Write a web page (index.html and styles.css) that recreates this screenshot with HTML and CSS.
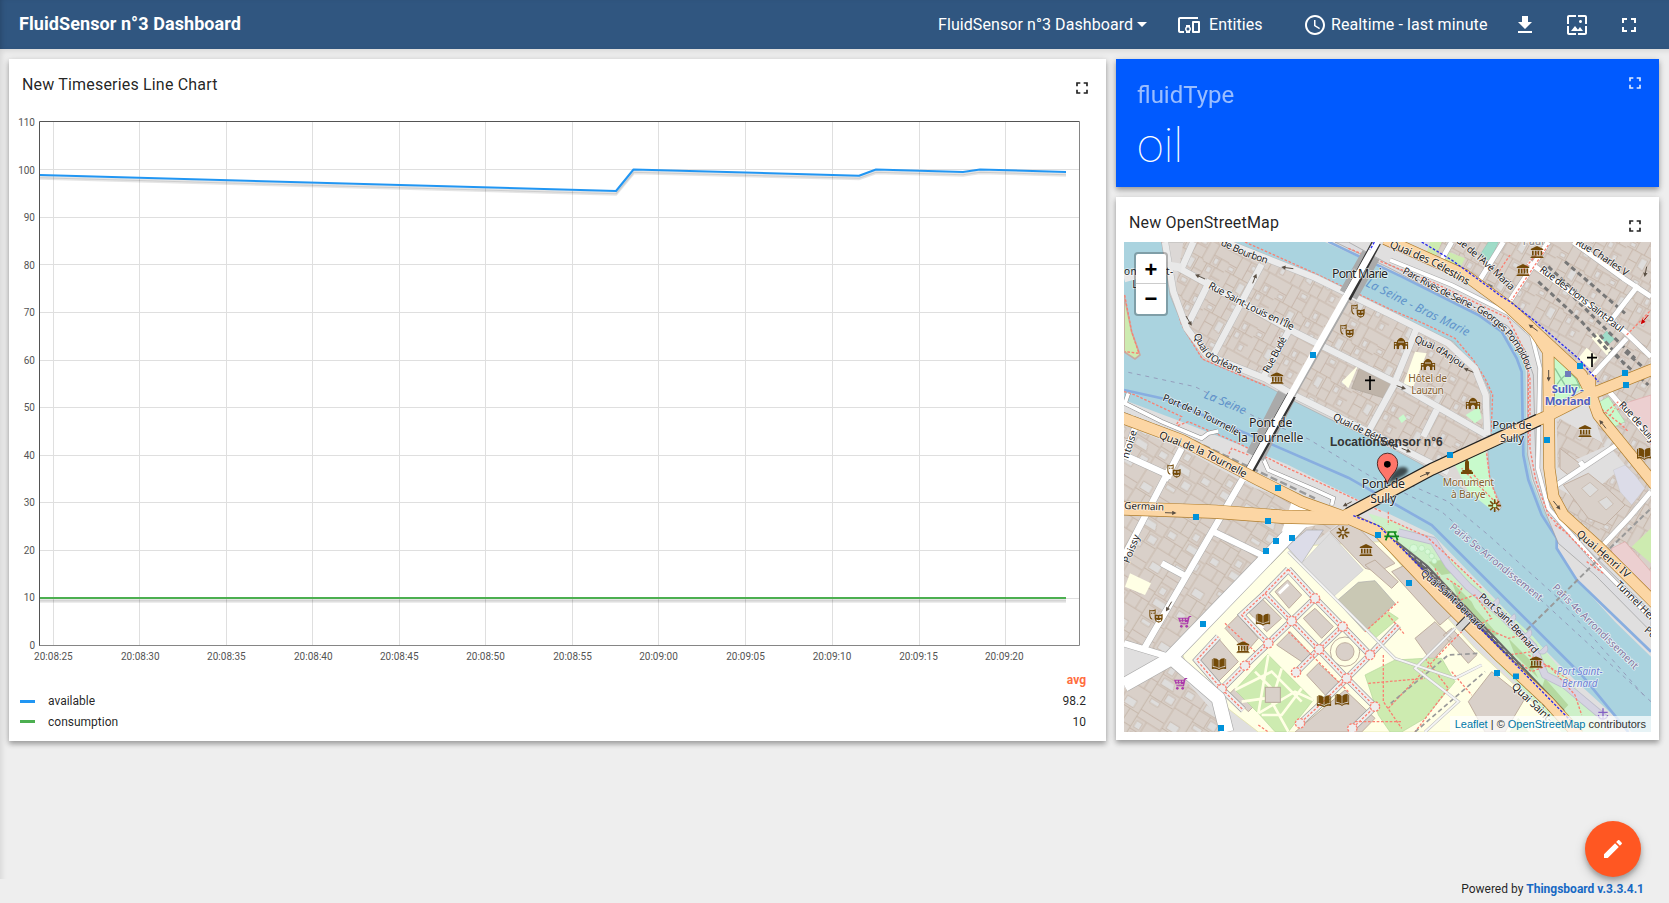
FILE: index.html
```html
<!DOCTYPE html>
<html lang="en">
<head>
<meta charset="utf-8">
<title>FluidSensor n°3 Dashboard</title>
<link rel="stylesheet" href="styles.css">
</head>
<body>
<svg class="defs" width="0" height="0" aria-hidden="true">
  <symbol id="i-full" viewBox="0 0 24 24"><path d="M7 14H5v5h5v-2H7v-3zm-2-4h2V7h3V5H5v5zm12 7h-3v2h5v-5h-2v3zM14 5v2h3v3h2V5h-5z"/></symbol>
</svg>
<header class="toolbar">
  <h1 class="title">FluidSensor n°3 Dashboard</h1>
  <div class="state"><span>FluidSensor n°3 Dashboard</span><i class="caret"></i></div>
  <div class="tool entities">
    <svg viewBox="0 0 24 24"><path d="M3 6h18V4H3c-1.1 0-2 .9-2 2v12c0 1.100.9 2 2 2h4v-2H3V6zm10 6H9v1.780c-.61.55-1 1.330-1 2.220s.39 1.670 1 2.220V20h4v-1.780c.61-.55 1-1.340 1-2.220s-.39-1.670-1-2.220V12zm-2 5.500c-.83 0-1.500-.67-1.500-1.500s.67-1.500 1.500-1.500 1.500.67 1.500 1.500-.67 1.500-1.500 1.500zM22 8h-6c-.5 0-1 .5-1 1v10c0 .5.5 1 1 1h6c.5 0 1-.5 1-1V9c0-.5-.5-1-1-1zm-1 10h-4v-8h4v8z"/></svg>
    <span>Entities</span>
  </div>
  <div class="tool time">
    <svg viewBox="0 0 24 24"><path d="M11.990 2C6.470 2 2 6.480 2 12s4.470 10 9.990 10C17.520 22 22 17.520 22 12S17.520 2 11.990 2zM12 20c-4.420 0-8-3.580-8-8s3.580-8 8-8 8 3.580 8 8-3.580 8-8 8zm.5-13H11v6l5.250 3.150.75-1.230-4.500-2.670z"/></svg>
    <span>Realtime - last minute</span>
  </div>
  <svg class="tb" viewBox="0 0 24 24"><path d="M19 9h-4V3H9v6H5l7 7 7-7zM5 18v2h14v-2H5z"/></svg>
  <svg class="tb" viewBox="0 0 24 24"><path d="M4 4h7V2H4c-1.100 0-2 .9-2 2v7h2V4zm6 9l-4 5h12l-3-4-2.030 2.710L10 13zm7-4.500c0-.83-.67-1.500-1.500-1.500S14 7.670 14 8.500s.67 1.500 1.500 1.500S17 9.330 17 8.500zM20 2h-7v2h7v7h2V4c0-1.100-.9-2-2-2zm0 18h-7v2h7c1.100 0 2-.9 2-2v-7h-2v7zM4 13H2v7c0 1.100.9 2 2 2h7v-2H4v-7z"/></svg>
  <svg class="tb" viewBox="0 0 24 24"><use href="#i-full"/></svg>
</header>

<main class="board">
  <section class="card chart-card">
    <div class="card-head"><h2>New Timeseries Line Chart</h2><svg class="fs" viewBox="0 0 24 24"><use href="#i-full"/></svg></div>
    <svg class="chart" viewBox="9 110 1097 555" width="1097" height="555">
      <path class="grid" d="M53.500 122V645M139.500 122V645M226.500 122V645M312.500 122V645M399.500 122V645M485.500 122V645M572.500 122V645M658.500 122V645M745.500 122V645M832.500 122V645M919.500 122V645M1005.500 122V645M40 169.500H1079M40 217.500H1079M40 264.500H1079M40 312.500H1079M40 360.500H1079M40 407.500H1079M40 455.500H1079M40 502.500H1079M40 550.500H1079M40 598.500H1079"/>
      <g class="shade">
        <path d="M40 177L616 193L634 171.500L859 177.500L876 171.500L963 174L980 171.500L1066 174"/>
        <path d="M40 600H1066"/>
        <path d="M40 178.500L616 194.500L634 173L859 179L876 173L963 175.500L980 173L1066 175.500"/>
        <path d="M40 601.500H1066"/>
      </g>
      <path class="line blue" d="M40 175L616 191L633.500 169.500L859 175.700L876 169.500L963 172L980 169.500L1066 172"/>
      <path class="line green" d="M40 598H1066"/>
      <path class="frame" d="M39.500 646V121.500H1079.500"/><path class="frame soft" d="M39.500 645.500H1079.500V121.500"/>
      <g class="tick y"><text x="35" y="126">110</text><text x="35" y="174">100</text><text x="35" y="221">90</text><text x="35" y="269">80</text><text x="35" y="316">70</text><text x="35" y="364">60</text><text x="35" y="411">50</text><text x="35" y="459">40</text><text x="35" y="506">30</text><text x="35" y="554">20</text><text x="35" y="601">10</text><text x="35" y="649">0</text></g>
      <g class="tick x"><text x="53.400" y="660">20:08:25</text><text x="140.300" y="660">20:08:30</text><text x="226.400" y="660">20:08:35</text><text x="313.300" y="660">20:08:40</text><text x="399.300" y="660">20:08:45</text><text x="485.500" y="660">20:08:50</text><text x="572.500" y="660">20:08:55</text><text x="658.500" y="660">20:09:00</text><text x="745.500" y="660">20:09:05</text><text x="832" y="660">20:09:10</text><text x="918.500" y="660">20:09:15</text><text x="1004.300" y="660">20:09:20</text></g>
    </svg>
    <div class="legend">
      <div class="avg">avg</div>
      <div class="row"><i class="sw sw-blue"></i><span>available</span><b>98.2</b></div>
      <div class="row"><i class="sw sw-green"></i><span>consumption</span><b>10</b></div>
    </div>
  </section>

  <div class="side">
    <section class="card fluid">
      <div class="fluid-text"><div class="fluid-label">fluidType</div><div class="fluid-value">oil</div></div>
      <svg class="fs" viewBox="0 0 24 24"><use href="#i-full"/></svg>
    </section>
    <section class="card map-card">
      <div class="card-head"><h2>New OpenStreetMap</h2><svg class="fs" viewBox="0 0 24 24"><use href="#i-full"/></svg></div>
      <div class="map">
<svg class="tiles" viewBox="27 21 1581 1470" width="527" height="490">
<defs>
  <pattern id="par" width="170" height="130" patternUnits="userSpaceOnUse" patternTransform="rotate(29)">
    <rect width="170" height="130" fill="#d9d0c9"/>
    <path d="M0 3H170M0 64H95L100 70H170M28 3V40H0M28 40V64M58 3V64M58 30H92V3M92 30V64M120 3V70M120 38H170M145 38V70M20 64V130M20 96H50V130M50 64V96M82 64V130M82 100H112V70M112 100V130M140 70V130M140 98H170" fill="none" stroke="#c3b2a5" stroke-width="2.500"/>
    <path d="M66 10h18v14H66zM126 44l14-2v20h-12zM56 74h20v34l-20-4zM6 46h16v12H6zM118 76h14v18h-14zM146 104h14v18h-14z" fill="#dedddc" stroke="#c3b2a5" stroke-width="2"/>
  </pattern>
  <pattern id="par2" width="190" height="150" patternUnits="userSpaceOnUse" patternTransform="rotate(-58)">
    <rect width="190" height="150" fill="#d9d0c9"/>
    <path d="M0 3H190M0 70H190M32 3V70M70 3V45H32M70 45V70M105 3V70M105 40H150V3M150 40V70M25 70V150M25 110H65V70M65 110V150M100 70V150M100 105H140V150M140 105V70M165 70V150" fill="none" stroke="#c3b2a5" stroke-width="2.500"/>
    <path d="M76 10h20v26H76zM156 14h24v34h-24zM32 116h24v26H32zM108 78h22v20h-22zM70 80h22v36l-22 8zM6 80h14v30H6z" fill="#dedddc" stroke="#c3b2a5" stroke-width="2"/>
  </pattern>
  <symbol id="museum" viewBox="0 0 40 36"><path d="M20 0L39 9V12H1V9zM5 14h5v14H5zM13.500 14h5v14h-5zM22 14h5v14h-5zM30.500 14h5v14h-5zM3 29h34v3H3zM0 33h40v3H0z"/></symbol>
  <symbol id="mask" viewBox="0 0 42 42"><path fill-rule="evenodd" d="M1 2Q10 6 20 1V14H17V5Q10 8 4 5V20Q5 27 10 29V32Q2 30 1 20zM6 11h4v3H6zM13 11h4v3h-4zM17 16Q29 20 41 15V28Q40 39 29 41Q18 39 17 28zM21 22v4h6v-4zM31 22v4h6v-4zM22 31Q29 37 36 31V35Q29 39 22 35z"/></symbol>
  <symbol id="manor" viewBox="0 0 44 36"><path fill-rule="evenodd" d="M10 10Q22 -8 34 10V14H44V36H0V14H10zM3 17v4h5v-4zM36 17v4h5v-4zM14 12v4h4v-4zM20 12v4h4v-4zM26 12v4h4v-4zM4 25v11h5V25zM35 25v11h5V25zM16 36V27Q22 18 28 27V36z"/></symbol>
  <symbol id="book" viewBox="0 0 44 38"><path d="M5 2Q16 1 21 8V31Q15 26 5 25zM39 2Q28 1 23 8V31Q29 26 39 25zM0 5L3 4V28Q16 28 22 34Q28 28 41 28V4L44 5V34Q28 31 22 38Q16 31 0 34z"/></symbol>
  <symbol id="cart" viewBox="0 0 42 38"><path d="M1 6H30L34 1H41V4H36L31 26H8V23H28L29 20H6zM6 9l1 3h6V9zm10 0v3h6V9zm9 0v3h4l1-3zM8 15l1 3h5v-3zm8 0v3h6v-3z" fill-rule="evenodd"/><circle cx="11" cy="32" r="4"/><circle cx="27" cy="32" r="4"/></symbol>
  <symbol id="mill" viewBox="-22 -22 44 44"><path d="M0 -5V-20M0 5V20M5 0H20M-5 0H-20M4 -4L14 -14M-4 -4L-14 -14M4 4L14 14M-4 4L-14 14" stroke="#734a08" stroke-width="5" fill="none"/></symbol>
  <symbol id="stop" viewBox="0 0 18 18"><rect width="18" height="18" fill="#0092da"/></symbol>
  <marker id="arw" viewBox="0 0 10 10" refX="5" refY="5" markerUnits="userSpaceOnUse" markerWidth="15" markerHeight="13" orient="auto"><path d="M0 0L10 5L0 10z" fill="#5b5044"/></marker>
  <marker id="arr" viewBox="0 0 10 10" refX="5" refY="5" markerUnits="userSpaceOnUse" markerWidth="16" markerHeight="14" orient="auto"><path d="M0 0L10 5L0 10z" fill="#cc0000"/></marker>
</defs>
<rect x="27" y="21" width="1581" height="1470" fill="#e0dfdf"/>
<path fill="url(#par2)" d="M27 570L200 640L420 760L690 850L500 1000L160 1270L27 1220zM27 1360L100 1290H170L350 1491H27z"/>
<path fill="url(#par)" d="M960 21H1608V735H1500L1400 430L1180 190L960 70z"/>
<path fill="#e0dfdf" d="M27 470L420 640L720 830L680 850L420 735L27 550zM27 480H40V530H27z"/>
<!-- right bank blocks -->
<path fill="url(#par)" d="M1325 545L1490 640L1608 750V1090L1330 810z"/>
<path fill="#e0dfdf" d="M1325 700L1480 630L1530 690L1400 800L1330 760z"/>
<path fill="#d9d0c9" stroke="#c3b2a5" stroke-width="3" d="M1335 640L1400 690L1360 720L1335 700zM1345 750L1420 715L1470 755L1530 810L1470 870L1420 850z"/>
<path fill="#dedddc" stroke="#c3b2a5" stroke-width="2" d="M1400 760l25-18 25 22-25 22zM1450 800l25-15 20 22-22 18z"/>
<path fill="#eccfd0" stroke="#e0a9a9" stroke-width="2" d="M1512 510L1608 480V630zM1490 940L1530 920L1608 1010V1085L1490 960z"/>
<path fill="#cdebb0" d="M1550 935L1608 880V985z"/>
<path fill="#dcdce8" stroke="#bbb" d="M1495 705L1530 690L1560 720L1590 760L1550 810L1515 770z"/>
<!-- university quarter -->
<path fill="#ffffe5" stroke="#dfe0a0" stroke-width="2" d="M520 935L200 1250L215 1290L345 1425L430 1491H1350L1080 1240L890 1030L800 920z"/>
<!-- water -->
<path class="water" d="M27 21H630L825 110L950 172L1085 235L1165 290L1215 360L1232 400L1235 650L1250 735L1290 835L1325 910V940L1385 1035L1500 1160L1608 1265V1491H1550L1385 1340L1225 1180L955 900L825 838L720 790L520 690L400 640L200 560L27 495z"/>
<path class="bank" d="M27 465L150 492L440 615L700 728L950 870L1240 1160L1400 1320L1540 1491M640 20L860 125L1090 240L1160 290L1205 370L1220 410L1225 660L1240 735L1280 840L1325 910V940L1385 1035L1608 1250"/>
<path fill="#cdebb0" stroke="#c9a9a0" stroke-width="5" d="M27 180L50 290L75 360L60 372L27 350z"/>
<path class="rd" d="M29 180L50 290L72 355L30 350"/>
<!-- island -->
<path fill="#dcd8d6" stroke="#aaa" stroke-width="2" d="M140 21H335L600 130L830 238L925 280L1015 320L1065 380L1110 440L1127 480L1118 640L1125 735L1160 815L1150 830L1065 775L960 710L840 645L640 550L540 500L450 450L265 374L210 290L165 180z"/>
<path fill="url(#par)" d="M205 21H330L600 140L830 250L920 290L1010 335L1060 390L1095 440L1110 480L1098 640L1090 650L960 700L840 630L650 540L540 480L450 435L280 360L225 280L180 170z"/>
<path fill="#c8facc" d="M1015 680L1110 640L1120 720L1152 815L1130 825L1060 770zM1052 540l40-25 8 35-20 15zM850 550l15-12 10 14-15 12z"/>
<path fill="#ffffe5" d="M680 440L730 390L700 460zM900 350L935 355L895 455L865 448z"/>
<path fill="#bfb4a9" stroke="#aaa095" stroke-width="2" d="M735 395L830 445L810 490L710 460z"/>
<path class="rd" d="M142 21L165 150L200 270L262 372L450 452M390 21L600 115L830 225L925 265L1020 310L1075 375L1110 430L1133 480L1128 600M1115 655L1125 735L1155 815L1040 700M1060 700L1110 760"/>
<path class="isl-c" d="M190 98L540 292L840 442L1115 600M440 88L290 370M285 135L222 262M520 290L440 435M842 440L760 590M965 525L925 605M330 21L600 128L840 245L1000 325L1080 400L1112 480L1117 600M150 21L175 170L215 280L275 360L450 430L540 482L840 630L1000 712M235 21L200 100M905 280L840 440"/>
<path class="isl" d="M190 98L540 292L840 442L1115 600M440 88L290 370M285 135L222 262M520 290L440 435M842 440L760 590M965 525L925 605M330 21L600 128L840 245L1000 325L1080 400L1112 480L1117 600M150 21L175 170L215 280L275 360L450 430L540 482L840 630L1000 712M235 21L200 100M905 280L840 440"/>
<path fill="none" stroke="#e8e8e8" stroke-width="24" d="M27 130L160 92L200 98"/>
<path class="ferry" d="M40 412L240 455L420 545L580 612L760 720L980 830L1240 1060L1608 1400M840 730L1000 800L1120 900L1330 1090L1590 1385"/>
<!-- quay strip right bank -->
<path fill="#dddde0" stroke="#999" stroke-width="2" d="M700 21L825 90L960 160L1100 225L1180 275L1230 345L1255 420L1262 660L1280 750L1330 860L1420 945L1608 1130V1190L1440 1020L1330 925L1290 830L1255 735L1238 660V400L1215 350L1165 285L1085 230L950 165L825 100L660 21z"/>
<path class="road-c thin" d="M825 75L1010 150L1180 235L1250 300L1275 400L1268 700L1300 820L1450 990L1608 1150"/>
<path class="road thin" d="M825 75L1010 150L1180 235L1250 300L1275 400L1268 700L1300 820L1450 990L1608 1150"/>
<path class="rd" d="M700 40L960 145L1180 250L1225 340L1245 430V640L1262 735L1300 840L1350 890L1460 1000M1320 870L1365 900M1415 980L1465 1015M1240 420V630"/>
<!-- park and rail -->
<path fill="#cdf0c8" d="M760 835L825 855L945 915L1105 1065L1255 1205L1405 1385L1470 1491H1340L1230 1370L1000 1130L815 920z"/>
<path fill="#b5d9a0" d="M940 980l40 40 30-5-30-40zM1010 1040l60 60 20 40-50-20zM1080 1120l70 80-30 5-50-50zM1180 1210l60 60 30 60-70-70zM1290 1330l70 80-20 20-60-70z"/>
<g fill="#d7f8d7" stroke="#b2e4b2" stroke-width="2"><circle cx="896" cy="940" r="12"/><circle cx="920" cy="940" r="9"/><circle cx="938" cy="950" r="8"/><circle cx="950" cy="963" r="8"/><circle cx="958" cy="978" r="8"/></g>
<path fill="none" stroke="#bdbdcc" stroke-width="24" stroke-linejoin="round" d="M850 892L955 918L1000 990L1060 1055L1160 1140L1255 1235L1290 1320L1350 1350L1470 1450"/>
<path fill="none" stroke="#d5d3e2" stroke-width="19" stroke-linejoin="round" d="M850 892L955 918L1000 990L1060 1055L1160 1140L1255 1235L1290 1320L1350 1350L1470 1450"/>
<g fill="#d5d3e2" stroke="#b5b5cc" stroke-width="2"><path d="M1125 1110a13 13 0 1 0 24 -22zM1174 1158a13 13 0 1 0 24 -22zM1222 1205a13 13 0 1 0 24 -22zM1270 1252a13 13 0 1 0 24 -22z"/></g>
<path class="rd" d="M825 855L935 905L1000 965L1100 1060M995 1030L1040 1060L1020 1100L1080 1080L1130 1150L1090 1170L1180 1210L1220 1200L1250 1250L1180 1260L1250 1310L1300 1290L1380 1380L1400 1440M960 1000L1000 1080L1060 1160L1130 1210L1200 1300L1320 1400M1240 1260L1310 1300L1370 1340"/>
<path fill="none" stroke="#686868" stroke-width="26" d="M835 925L930 1000L1080 1160L1340 1435"/>
<path fill="none" stroke="#eee" stroke-width="2.500" stroke-dasharray="14 8" d="M835 918L930 993L1084 1156L1344 1431M830 930L922 1008L1074 1166L1334 1440"/>
<path fill="none" stroke="#686868" stroke-width="10" stroke-dasharray="12 8" d="M835 950L1100 1220L1350 1470"/>
<path fill="none" stroke="#999" stroke-width="6" stroke-dasharray="16 9" d="M1235 1185L1420 1003L1608 820"/>
<!-- left bank details -->
<path class="rd" d="M27 470L60 480L200 545L180 575L220 560L370 625L520 700L640 755L800 830M330 680L350 640L400 660M820 830V870"/>
<path fill="none" stroke="#9a9a9a" stroke-width="7" stroke-dasharray="22 10" d="M27 535L210 605L390 690L600 790"/>
<path fill="none" stroke="#888" stroke-width="14" d="M40 475L30 505L140 560L260 610L280 595L310 588M440 660L460 705L600 765L655 790L650 810"/>
<path fill="none" stroke="#fff" stroke-width="11" d="M40 475L30 505L140 560L260 610L280 595L310 588M440 660L460 705L600 765L655 790L650 810"/>
<path fill="#ffffe5" d="M45 1015L108 1045L90 1080L30 1055z"/>
<path fill="#dcdce8" stroke="#aaa" stroke-width="2" d="M515 935L575 885L625 885L560 985z"/>
<path fill="#dedddd" stroke="#ccc" stroke-width="2" d="M560 985L645 895L745 1005L655 1085z"/>
<path fill="#d9d0c9" stroke="#c3b2a5" stroke-width="3" d="M645 890L700 850L840 985L790 1010L750 1000z"/>
<path fill="#c9c8b4" stroke="#aaa" stroke-width="2" d="M665 1098L730 1042L780 1037L840 1105L750 1190z"/>
<g fill="#d9d0c9" stroke="#bfae9f" stroke-width="3">
  <path d="M480 1070L518 1035L560 1080L522 1120zM400 1130L440 1090L500 1150L455 1190zM330 1180L370 1140L430 1210L395 1250zM250 1270L310 1210L370 1280L310 1340zM565 1150L600 1120L655 1175L620 1210zM485 1230L525 1190L590 1260L560 1280zM575 1320L610 1285L680 1350L640 1390zM540 1491L690 1365L780 1450L740 1491zM750 990L780 975L850 1040L830 1060zM830 1010L870 990L1010 1140L975 1170zM900 1210L960 1160L1010 1210L950 1280zM985 1200L1010 1180L1085 1260L1060 1285zM1060 1400L1130 1310L1230 1390L1170 1491H1110zM360 1360L420 1410L400 1430L345 1375z"/>
  <circle cx="690" cy="1250" r="44" fill="#ffffe5"/><circle cx="690" cy="1250" r="27"/>
</g>
<path fill="none" stroke="#fff" stroke-width="9" d="M492 1075L520 1048M412 1150L445 1180"/>
<g fill="#cdebb0" stroke="#b4d79a" stroke-width="2"><path d="M458 1258L595 1395L520 1490H480L430 1435L360 1365zM750 1320L840 1275L930 1270L980 1270L1020 1340L930 1450L860 1491H825L790 1440zM760 1180L820 1130L850 1150L780 1210zM1185 1491L1210 1450L1240 1491z"/></g>
<g fill="none" stroke="#ffffe5" stroke-width="8"><path d="M460 1260L430 1435M360 1365L470 1310L560 1400M430 1435L540 1370L595 1395M380 1400L450 1390M500 1300L470 1400L520 1490M420 1310L470 1360M560 1360L500 1440L440 1440"/></g>
<rect x="451" y="1357" width="45" height="45" fill="#d9d0c9" stroke="#b8a99a" stroke-width="3"/>
<path class="campus-c" d="M520 1003L600 1090L683 1175L765 1260L695 1330L625 1400L555 1465M520 1003L450 1075L380 1140L460 1225L390 1292L320 1362L245 1275L310 1205M600 1090L530 1158L460 1225M450 1075L530 1158L612 1243L695 1330L780 1415L712 1480M683 1175L612 1243L543 1312M320 1362L385 1425M765 1260L850 1170"/>
<path class="campus" d="M520 1003L600 1090L683 1175L765 1260L695 1330L625 1400L555 1465M520 1003L450 1075L380 1140L460 1225L390 1292L320 1362L245 1275L310 1205M600 1090L530 1158L460 1225M450 1075L530 1158L612 1243L695 1330L780 1415L712 1480M683 1175L612 1243L543 1312M320 1362L385 1425M765 1260L850 1170"/>
<path class="rd" d="M520 1003L600 1090L683 1175L765 1260L695 1330L625 1400L555 1465M520 1003L450 1075L380 1140L460 1225L390 1292L320 1362L245 1275L310 1205M600 1090L530 1158L460 1225M450 1075L530 1158L612 1243L695 1330L780 1415L712 1480M683 1175L612 1243L543 1312M320 1362L385 1425M765 1260L850 1170M330 1165L420 1250M520 1190L700 1370M750 1190L850 1100M760 1345L930 1330M805 1260V1400L860 1480M930 1270L1000 1360L900 1491M720 1460H860M820 1420L1000 1230L1040 1190M430 1470L460 1491M1010 1310L1070 1380M820 1140L870 1200"/>
<g class="nodes"><circle cx="600" cy="1090" r="14"/><circle cx="530" cy="1158" r="14"/><circle cx="460" cy="1225" r="14"/><circle cx="390" cy="1292" r="14"/><circle cx="320" cy="1362" r="14"/><circle cx="683" cy="1175" r="14"/><circle cx="612" cy="1243" r="14"/><circle cx="543" cy="1312" r="14"/><circle cx="765" cy="1260" r="14"/><circle cx="695" cy="1330" r="14"/><circle cx="555" cy="1465" r="14"/><circle cx="780" cy="1415" r="14"/><circle cx="712" cy="1480" r="14"/></g>
<path fill="none" stroke="#999" stroke-width="5" stroke-dasharray="14 9" d="M827 1405L1000 1260L1090 1255M900 1491L1110 1310"/>
<path fill="none" stroke="#bbb" stroke-width="9" d="M520 950L650 1080L840 1270L1020 1330L1100 1290M1020 1180L900 1300L1030 1400L930 1491"/><path fill="none" stroke="#f4f4f4" stroke-width="6" d="M520 950L650 1080L840 1270L1020 1330L1100 1290M1020 1180L900 1300L1030 1400L930 1491"/>
<!-- north-east streets -->
<path fill="#cdebb0" d="M945 21H980L960 70H930zM1000 50L1050 70L1020 130L985 100z"/><path fill="#9fdcc8" stroke="#7cc0aa" d="M1120 21H1150L1125 80L1095 60zM1450 315L1475 288L1498 312L1470 338z"/>
<path fill="#ffffe5" d="M1390 370L1415 338L1450 370L1425 400zM1430 310l15-15 50 55-18 12z"/>
<path fill="none" stroke="#777" stroke-width="9" stroke-dasharray="15 10" d="M1270 140L1400 260L1500 370M1300 95L1490 270M1350 80L1530 235M1340 150L1560 370M960 75L1140 160M1500 360L1600 450M1530 350L1600 410M1455 300L1530 390"/>
<path class="road-c n" d="M1010 21L965 100M1165 21L1085 150M1300 21L1180 205M1240 80L1530 290L1608 365M1375 21L1525 130L1608 185M1570 150L1485 260M1535 310L1425 430M1465 450L1608 615M1505 630L1325 750M1395 680L1410 700M1608 770L1540 850L1460 935"/>
<path class="road n" d="M1010 21L965 100M1165 21L1085 150M1300 21L1180 205M1240 80L1530 290L1608 365M1375 21L1525 130L1608 185M1570 150L1485 260M1535 310L1425 430M1465 450L1608 615M1505 630L1325 750M1395 680L1410 700M1608 770L1540 850L1460 935"/>
<path class="rd" d="M1300 30L1190 195M1280 40L1220 110M1145 120L1185 60M1535 300L1608 225M1450 560L1530 510M1440 490L1540 590"/>
<path fill="#c8facc" stroke="#aaccaa" stroke-width="2" d="M1308 345L1408 440V460L1330 500L1310 520zM1445 505L1480 485L1530 560L1500 575z"/>
<path class="rd" d="M1450 515L1520 570M1455 545L1510 500M1470 565L1500 520"/>
<path fill="none" stroke="#8cc79c" stroke-width="4" d="M1320 400L1350 450L1400 450M1325 450Q1370 380 1395 460"/>
<!-- white left bank roads -->
<g class="road-c w"><path d="M390 720L85 1245M165 700L27 965M200 640L150 735M295 890L440 960M140 985L205 1020M27 660L170 725M60 580L30 660M27 1225L175 1270"/><path class="big" d="M570 850L160 1275L27 1350M160 1260L310 1390L335 1491"/></g>
<g class="road w"><path d="M390 720L85 1245M165 700L27 965M200 640L150 735M295 890L440 960M140 985L205 1020M27 660L170 725M60 580L30 660M27 1225L175 1270"/><path class="big" d="M570 850L160 1275L27 1350M160 1260L310 1390L335 1491"/></g>
<path fill="#fff" d="M530 800L650 835V860L560 880L500 890z"/>
<path fill="none" stroke="#aaa" stroke-width="58" d="M768 60L700 180M515 480L420 665"/>
<path fill="none" stroke="#333" stroke-width="28" d="M785 21L695 190M530 480L405 705"/>
<path fill="none" stroke="#aaa" stroke-width="23" d="M695 190L530 480M405 705L390 725"/>
<path fill="none" stroke="#fff" stroke-width="20" d="M787 18L610 332L385 735"/>
<!-- orange roads -->
<g class="orange-c"><path d="M810 12L1050 120L1180 215L1260 290L1400 420L1425 470L1450 540L1620 750M1260 290L1300 350L1303 700L1315 785L1345 840L1450 935L1620 1105M1620 400L1425 478L1303 540L950 703L690 842M20 548L200 615L430 735L560 800L700 850L790 890L980 1090L1150 1260L1300 1400L1390 1500M1425 420V490"/><path class="wide" d="M20 820L300 830L500 845L700 850"/></g>
<path fill="none" stroke="#222" stroke-width="39" d="M700 837L950 703L1270 555"/>
<g class="orange"><path d="M810 12L1050 120L1180 215L1260 290L1400 420L1425 470L1450 540L1620 750M1260 290L1300 350L1303 700L1315 785L1345 840L1450 935L1620 1105M1620 400L1425 478L1303 540L950 703L690 842M20 548L200 615L430 735L560 800L700 850L790 890L980 1090L1150 1260L1300 1400L1390 1500M1425 420V490"/><path class="wide" d="M20 820L300 830L500 845L700 850"/></g>
<path class="bluedash" d="M920 21L1010 75L1160 185L1185 200L1250 250L1390 370L1450 440M715 842L790 872L860 940L1130 1215L1370 1460M778 21L765 45"/>
<path fill="none" stroke="#333" stroke-width="26" d="M1032 1180L1058 1153"/><path fill="none" stroke="#d5d5d5" stroke-width="20" d="M1028 1184L1062 1149"/>
<g class="arrow" marker-end="url(#arw)"><path d="M1268 288L1246 272"/><path d="M1301 405V433"/><path d="M1473 580L1457 560"/><path d="M915 725L940 714"/><path d="M1315 798L1332 819"/><path d="M535 101L505 97"/><path d="M413 145L422 122"/><path d="M270 132L246 121"/><path d="M213 243L227 267"/><path d="M1075 412L1052 402"/><path d="M845 452L867 460"/><path d="M860 640L882 649"/><path d="M150 833L178 834"/><path d="M170 1100L156 1124"/><path d="M1595 95L1590 120"/><path d="M710 800L689 811"/></g>
<path class="arrow red" marker-end="url(#arr)" d="M1600 240L1582 262"/>
<!-- bus stops -->
<g>
<use href="#stop" x="585" y="351" width="18" height="18"/><use href="#stop" x="1386" y="384" width="18" height="18"/><use href="#stop" x="1521" y="405" width="18" height="18"/><use href="#stop" x="1524" y="441" width="18" height="18"/><use href="#stop" x="1287" y="606" width="18" height="18"/><use href="#stop" x="996" y="651" width="18" height="18"/><use href="#stop" x="480" y="750" width="18" height="18"/><use href="#stop" x="234" y="837" width="18" height="18"/><use href="#stop" x="450" y="849" width="18" height="18"/><use href="#stop" x="522" y="900" width="18" height="18"/><use href="#stop" x="474" y="909" width="18" height="18"/><use href="#stop" x="444" y="939" width="18" height="18"/><use href="#stop" x="255" y="1158" width="18" height="18"/><use href="#stop" x="309" y="1470" width="18" height="18"/><use href="#stop" x="780" y="891" width="18" height="18"/><use href="#stop" x="873" y="1035" width="18" height="18"/><use href="#stop" x="1137" y="1305" width="18" height="18"/><use href="#stop" x="1194" y="1315" width="18" height="18"/>
<rect x="1350" y="408" width="18" height="18" fill="#6f7dbb"/>
</g>
<!-- points of interest -->
<g fill="#734a08">
<use href="#museum" x="466" y="412" width="40" height="36"/><use href="#museum" x="1246" y="33" width="40" height="36"/><use href="#museum" x="1204" y="87" width="40" height="36"/><use href="#museum" x="1390" y="570" width="40" height="36"/><use href="#museum" x="733" y="927" width="40" height="36"/><use href="#museum" x="364" y="1219" width="40" height="36"/><use href="#museum" x="1243" y="1264" width="40" height="36"/>
<use href="#mask" x="708" y="207" width="42" height="42"/><use href="#mask" x="675" y="267" width="42" height="42"/><use href="#mask" x="156" y="687" width="42" height="42"/><use href="#mask" x="102" y="1122" width="42" height="42"/>
<use href="#manor" x="836" y="307" width="44" height="36"/><use href="#manor" x="917" y="370" width="44" height="36"/><use href="#manor" x="1052" y="487" width="44" height="36"/>
<use href="#book" x="422" y="1134" width="44" height="38"/><use href="#book" x="290" y="1268" width="44" height="38"/><use href="#book" x="605" y="1379" width="44" height="38"/><use href="#book" x="659" y="1375" width="44" height="38"/><use href="#book" x="1566" y="637" width="44" height="38"/>
<use href="#mill" x="663" y="872" width="42" height="42"/><use href="#mill" x="1118" y="791" width="42" height="42"/>
<path d="M1050 680L1056 673L1062 680V705H1070V710H1074V717H1038V710H1042V705H1050z"/>
</g>
<g fill="#ac39ac"><use href="#cart" x="188" y="1142" width="42" height="38"/><use href="#cart" x="176" y="1328" width="42" height="38"/></g>
<path fill="none" stroke="#000" stroke-width="5" d="M765 423V465M750 436H780M1431 355V396M1416 368H1446"/>
<path fill="none" stroke="#0d8a1a" stroke-width="5" d="M817 891H845M808 904H852M822 891L812 916M838 891L848 916"/>
<path fill="none" stroke="#8461c4" stroke-width="4" d="M1464 1420V1450M1450 1432H1478M1450 1440Q1452 1452 1464 1452Q1476 1452 1478 1440"/>
<!-- labels -->
<defs>
<path id="l1" d="M278 158L400 224L540 290"/><path id="l2" d="M316 30L390 64L470 92"/><path id="l3" d="M750 152L890 222L1080 316"/><path id="l4" d="M460 416L524 296"/><path id="l5" d="M236 300Q260 365 300 384L395 424"/><path id="l6" d="M265 488L410 548"/><path id="l7" d="M141 496L250 542L390 614"/><path id="l8" d="M130 608L260 660L400 734"/><path id="l9" d="M652 552L760 606L855 650"/>
<path id="l10" d="M822 36L950 90L1080 164"/><path id="l11" d="M861 114L960 168L1090 232Q1200 297 1240 420"/><path id="l12" d="M1022 20L1100 85L1200 180"/><path id="l13" d="M1272 108L1400 202L1540 312"/><path id="l14" d="M1380 28L1450 68L1540 130"/><path id="l15" d="M896 320L960 347L1060 412"/><path id="l16" d="M1510 512Q1550 550 1620 638"/>
<path id="l17" d="M1002 880L1310 1130"/><path id="l18" d="M1310 1060L1590 1336"/><path id="l19" d="M1382 900L1450 957L1560 1053"/><path id="l20" d="M1500 1050L1640 1190"/><path id="l21" d="M1090 1088L1170 1160L1280 1283"/><path id="l22" d="M915 1017L1000 1092L1120 1212"/><path id="l23" d="M1188 1357L1320 1482"/><path id="l24" d="M40 672L72 571"/><path id="l25" d="M42 986L80 890"/>
</defs>
<g class="lb">
<text class="s28"><textPath href="#l1" textLength="284">Rue Saint-Louis en l'Île</textPath></text>
<text class="s28"><textPath href="#l2" textLength="150">de Bourbon</textPath></text>
<text class="s28"><textPath href="#l4" textLength="118">Rue Budé</textPath></text>
<text class="s28"><textPath href="#l5" textLength="192">Quai d'Orléans</textPath></text>
<text class="s28"><textPath href="#l7" textLength="250">Port de la Tournelle</textPath></text>
<text class="s30"><textPath href="#l8" textLength="286">Quai de la Tournelle</textPath></text>
<text class="s28"><textPath href="#l9" textLength="214">Quai de Béthune</textPath></text>
<text class="s30"><textPath href="#l10" textLength="262">Quai des Célestins</textPath></text>
<text class="s28"><textPath href="#l11" textLength="490">Parc Rives de Seine - Georges Pompidou</textPath></text>
<text class="s28"><textPath href="#l12" textLength="222">ue de l'Avé Maria</textPath></text>
<text class="s28"><textPath href="#l13" textLength="306">Rue des Lions Saint-Paul</textPath></text>
<text class="s28"><textPath href="#l14" textLength="180">Rue Charles V</textPath></text>
<text class="s28"><textPath href="#l15" textLength="168">Quai d'Anjou</textPath></text>
<text class="s28"><textPath href="#l16" textLength="152">Rue de Sully</textPath></text>
<text class="s30"><textPath href="#l19" textLength="200">Quai Henri IV</textPath></text>
<text class="s28"><textPath href="#l20">Tunnel Henri</textPath></text>
<text class="s28"><textPath href="#l21" textLength="238">Port Saint-Bernard</textPath></text>
<text class="s28"><textPath href="#l22" textLength="248">Quai-Saint-Bernard</textPath></text>
<text class="s30"><textPath href="#l23" textLength="156">Quai Saint-</textPath></text>
<text class="s28"><textPath href="#l24">ntoise</textPath></text>
<text class="s28"><textPath href="#l25">Poissy</textPath></text>
<text class="s28" x="27" y="822" transform="rotate(2 27 822)" textLength="120">Germain</text>
<text class="s28" x="27" y="119" textLength="148">ont Saint-</text><text class="s28" x="52" y="160">Louis</text>
<text class="s28" x="1586" y="1188" transform="rotate(40 1586 1188)">Po</text>
<g class="mid s34"><text x="735" y="129" textLength="168">Pont Marie</text><text x="467" y="576" textLength="130">Pont de</text><text x="467" y="620" textLength="196">la Tournelle</text><text x="805" y="760" textLength="130">Pont de</text><text x="805" y="804" textLength="78">Sully</text></g>
<g class="mid s32"><text x="1191" y="583" textLength="118">Pont de</text><text x="1191" y="622" textLength="72">Sully</text></g>
<g class="mid s30 gray"><text x="1255" y="30">Paul</text></g>
<g class="mid s30 brown"><text x="938" y="441" textLength="116">Hôtel de</text><text x="938" y="476" textLength="98">Lauzun</text><text x="1060" y="752" textLength="154">Monument</text><text x="1060" y="788" textLength="104">à Barye</text></g>
<g class="mid metro"><text x="1358" y="473" textLength="96">Sully -</text><text x="1358" y="510" textLength="138">Morland</text></g>
</g>
<g class="lw">
<text><textPath href="#l3" textLength="342">La Seine - Bras Marie</textPath></text><text><textPath href="#l6" textLength="132">La Seine</textPath></text>
</g>
<g class="lb arr"><text><textPath href="#l17" textLength="348">Paris 5e Arrondissement</textPath></text><text><textPath href="#l18" textLength="348">Paris 4e Arrondissement</textPath></text></g>
<g class="lb mid port"><text x="1394" y="1320" textLength="138">Port Saint-</text><text x="1394" y="1355" textLength="108">Bernard</text></g>
<!-- device marker -->
<path d="M817 748Q838 690 870 697Q890 704 866 722Q850 730 817 748z" fill="#000" opacity=".65" filter="blur(4px)"/>
<path d="M817 747C812 722 787 712 787 685A30 30 0 0 1 848 685C848 712 822 722 817 747z" fill="#fe7569" stroke="#3a1512" stroke-width="2.500"/>
<circle cx="817" cy="688" r="10"/>
<text class="dev" x="814" y="632" textLength="338">LocationSensor n°6</text>
</svg>
        <div class="zoom"><span>+</span><span>−</span></div>
        <div class="attrib"><a>Leaflet</a> | © <a>OpenStreetMap</a> contributors</div>
      </div>
    </section>
  </div>
</main>
<footer class="foot"><span>Powered by <b>Thingsboard v.3.3.4.1</b></span></footer>
<button class="fab" aria-label="Edit"><svg viewBox="0 0 24 24"><path d="M3 17.250V21h3.750L17.810 9.940l-3.750-3.750L3 17.250zM20.710 7.040c.39-.39.39-1.020 0-1.410l-2.340-2.340c-.39-.39-1.020-.39-1.410 0l-1.830 1.830 3.750 3.750 1.830-1.830z"/></svg></button>
</body>
</html>
```
FILE: styles.css
```css
* { box-sizing: border-box; }
body { margin: 0; width: 1669px; height: 903px; overflow: hidden; display: flex; flex-direction: column; position: relative; background: #eee; font-family: Roboto, sans-serif; color: rgba(0,0,0,.87); }
.defs { position: absolute; }
h1, h2 { margin: 0; }
.toolbar { height: 49px; flex: none; display: flex; align-items: center; background: #305680; color: #fff; fill: #fff; font-size: 16px; padding: 0 28px 0 19px; box-shadow: inset 4px 0 6px -4px rgba(0,0,0,.25); }
.title { font-size: 18px; font-weight: 700; line-height: 24px; padding-bottom: 2px; flex: 1; letter-spacing: .08px; }
.state { display: flex; align-items: center; width: 210px; margin-right: 29px; white-space: nowrap; letter-spacing: .08px; }
.caret { border: 5px solid transparent; border-top-color: #fff; border-bottom: 0; margin-left: 4px; }
.tool { display: flex; align-items: center; gap: 8px; white-space: nowrap; letter-spacing: .1px; }
.tool svg { width: 24px; height: 24px; }
.entities { width: 126px; }
.time { width: 210px; gap: 4px; }
.tb { width: 24px; height: 24px; margin-right: 28px; }
.tb:last-child { margin-right: 0; }
.board { flex: 1; display: flex; align-items: flex-start; gap: 10px; padding: 10px 9px; box-shadow: inset 5px 5px 6px -4px rgba(0,0,0,.12); }
.card { background: #fff; box-shadow: 0 3px 5px rgba(0,0,0,.3), 0 1px 8px rgba(0,0,0,.1); }
.chart-card { width: 1097px; height: 682px; }
.card-head { display: flex; justify-content: space-between; }
.card-head h2 { font-size: 16px; font-weight: 400; line-height: 20px; letter-spacing: .18px; }
.chart-card .card-head { height: 51px; padding: 16px 14px 0 13px; }
.fs { width: 20px; height: 20px; fill: rgba(0,0,0,.87); flex: none; }
.chart-card .fs { margin-top: 3px; }
.chart { display: block; }
.grid { fill: none; stroke: #dfdfdf; }
.line { fill: none; stroke-width: 2; stroke-linejoin: round; }
.blue { stroke: #2196f3; }
.green { stroke: #4caf50; }
.shade { fill: none; stroke: rgba(0,0,0,.1); stroke-width: 2.5; }
.frame { fill: none; stroke: #545454; }
.soft { stroke: #858585; }
.tick { font-size: 10px; fill: #545454; }
.tick.y { text-anchor: end; }
.tick.x { text-anchor: middle; }
.legend { padding: 0 20px 0 11px; font-size: 12px; margin-top: -1px; }
.avg { text-align: right; color: #ff6e40; font-weight: 700; height: 20px; line-height: 32px; margin-top: -1px; }
.row { display: flex; align-items: center; height: 21px; }
.legend .row:nth-child(2) { margin-top: 7px; height: 20px; }
.row span { flex: 1; margin-left: 13px; }
.row b { font-weight: 400; }
.sw { width: 15px; height: 3px; }
.sw-blue { background: #2196f3; }
.sw-green { background: #4caf50; }
.side { width: 543px; display: flex; flex-direction: column; gap: 10px; }
.fluid { height: 128px; background: #005aff; color: #fff; display: flex; justify-content: space-between; padding: 14px 14px 0 21px; }
.fluid .fs { fill: rgba(255,255,255,.87); }
.fluid-label { font-size: 24px; line-height: 28px; margin-top: 8px; opacity: .6; }
.fluid-value { font-size: 48px; line-height: 56px; font-weight: 100; margin-top: 9px; }
.map-card { height: 543px; padding: 0 8px; }
.map-card .card-head { height: 45px; padding: 16px 6px 0 5px; }
.map-card .fs { margin-top: 3px; }
.map { position: relative; width: 527px; height: 490px; overflow: hidden; }
.tiles { display: block; }
.water { fill: #aad3df; }
.bank { fill: none; stroke: #88aee0; stroke-width: 8; }
.rd { fill: none; stroke: #fa8072; stroke-width: 4; stroke-dasharray: 8 5; }
.ferry { fill: none; stroke: #8f93b5; stroke-width: 2.5; stroke-dasharray: 12 14; }
.isl-c { fill: none; stroke: #bbb; stroke-width: 22; stroke-linejoin: round; }
.isl { fill: none; stroke: #ebebeb; stroke-width: 19; stroke-linejoin: round; }
.road-c, .road { fill: none; stroke-linejoin: round; }
.road-c { stroke: #aaa; }
.road { stroke: #fff; }
.road-c.thin { stroke-width: 15; }
.road.thin { stroke-width: 11; }
.road-c.n { stroke-width: 18; }
.road.n { stroke-width: 15; }
.road-c.w { stroke-width: 22; }
.road.w { stroke-width: 19; }
.road-c .big { stroke-width: 45; }
.road .big { stroke-width: 41; }
.orange-c, .orange { fill: none; stroke-linejoin: round; }
.orange-c { stroke: #b07d2c; stroke-width: 36; }
.orange { stroke: #fcd6a4; stroke-width: 32; }
.orange-c .wide { stroke-width: 42; }
.orange .wide { stroke-width: 38; }
.bluedash { fill: none; stroke: #2a2af0; stroke-width: 4; stroke-dasharray: 8 5; }
.arrow { fill: none; stroke: #5b5044; stroke-width: 3; }
.arrow.red { stroke: #cc0000; }
.campus-c { fill: none; stroke: #999; stroke-width: 20; }
.campus { fill: none; stroke: #eee; stroke-width: 16; }
.nodes { fill: #eee; stroke: #fa8072; stroke-width: 4; stroke-dasharray: 7 4; }
.lb { font-family: "Noto Sans", sans-serif; fill: #222; stroke: rgba(255,255,255,.65); stroke-width: 5px; paint-order: stroke; stroke-linejoin: round; }
.s28 { font-size: 30px; }
.s30 { font-size: 32px; }
.brown.s30, .gray.s30 { font-size: 31px; }
.s32 { font-size: 34px; }
.s34 { font-size: 37px; }
.mid { text-anchor: middle; }
.gray { fill: #888; }
.brown { fill: #846030; }
.metro { fill: #5060c0; font-weight: 700; font-size: 34px; }
.lw { font-family: "Noto Sans", sans-serif; font-style: italic; font-size: 36px; fill: #5f93cb; }
.arr { fill: #8577a0; font-size: 31px; }
.port { fill: #6f80d4; font-size: 30px; font-style: italic; }
.dev { font: bold 36px "Liberation Sans", sans-serif; fill: #333; text-anchor: middle; }
.zoom { position: absolute; left: 10px; top: 10px; width: 34px; height: 64px; border: 2px solid rgba(0,0,0,.25); border-radius: 4px; background: #fff; background-clip: padding-box; display: flex; flex-direction: column; font: bold 22px/32px "Liberation Sans", sans-serif; color: #000; text-align: center; }
.zoom span { height: 29px; }
.zoom span + span { height: 31px; line-height: 30px; border-top: 1px solid #ccc; }
.attrib { position: absolute; right: 0; bottom: 0; height: 16px; padding: 0 5px; background: rgba(255,255,255,.72); font: 11px/16px "Liberation Sans", sans-serif; color: #333; white-space: nowrap; }
.attrib a { color: #0078a8; }
.foot { flex: none; height: 24px; padding-right: 25px; text-align: right; font-size: 12px; line-height: 14px; padding-top: 3px; }
.foot b { color: #1769c4; font-weight: 700; }
.fab { position: absolute; left: 1585px; top: 821px; width: 56px; height: 56px; border: 0; border-radius: 50%; background: #ff5722; box-shadow: 0 3px 5px rgba(0,0,0,.25), 0 5px 12px rgba(0,0,0,.18); display: flex; align-items: center; justify-content: center; padding: 0; }
.fab svg { width: 24px; height: 24px; fill: #fff; }
```
